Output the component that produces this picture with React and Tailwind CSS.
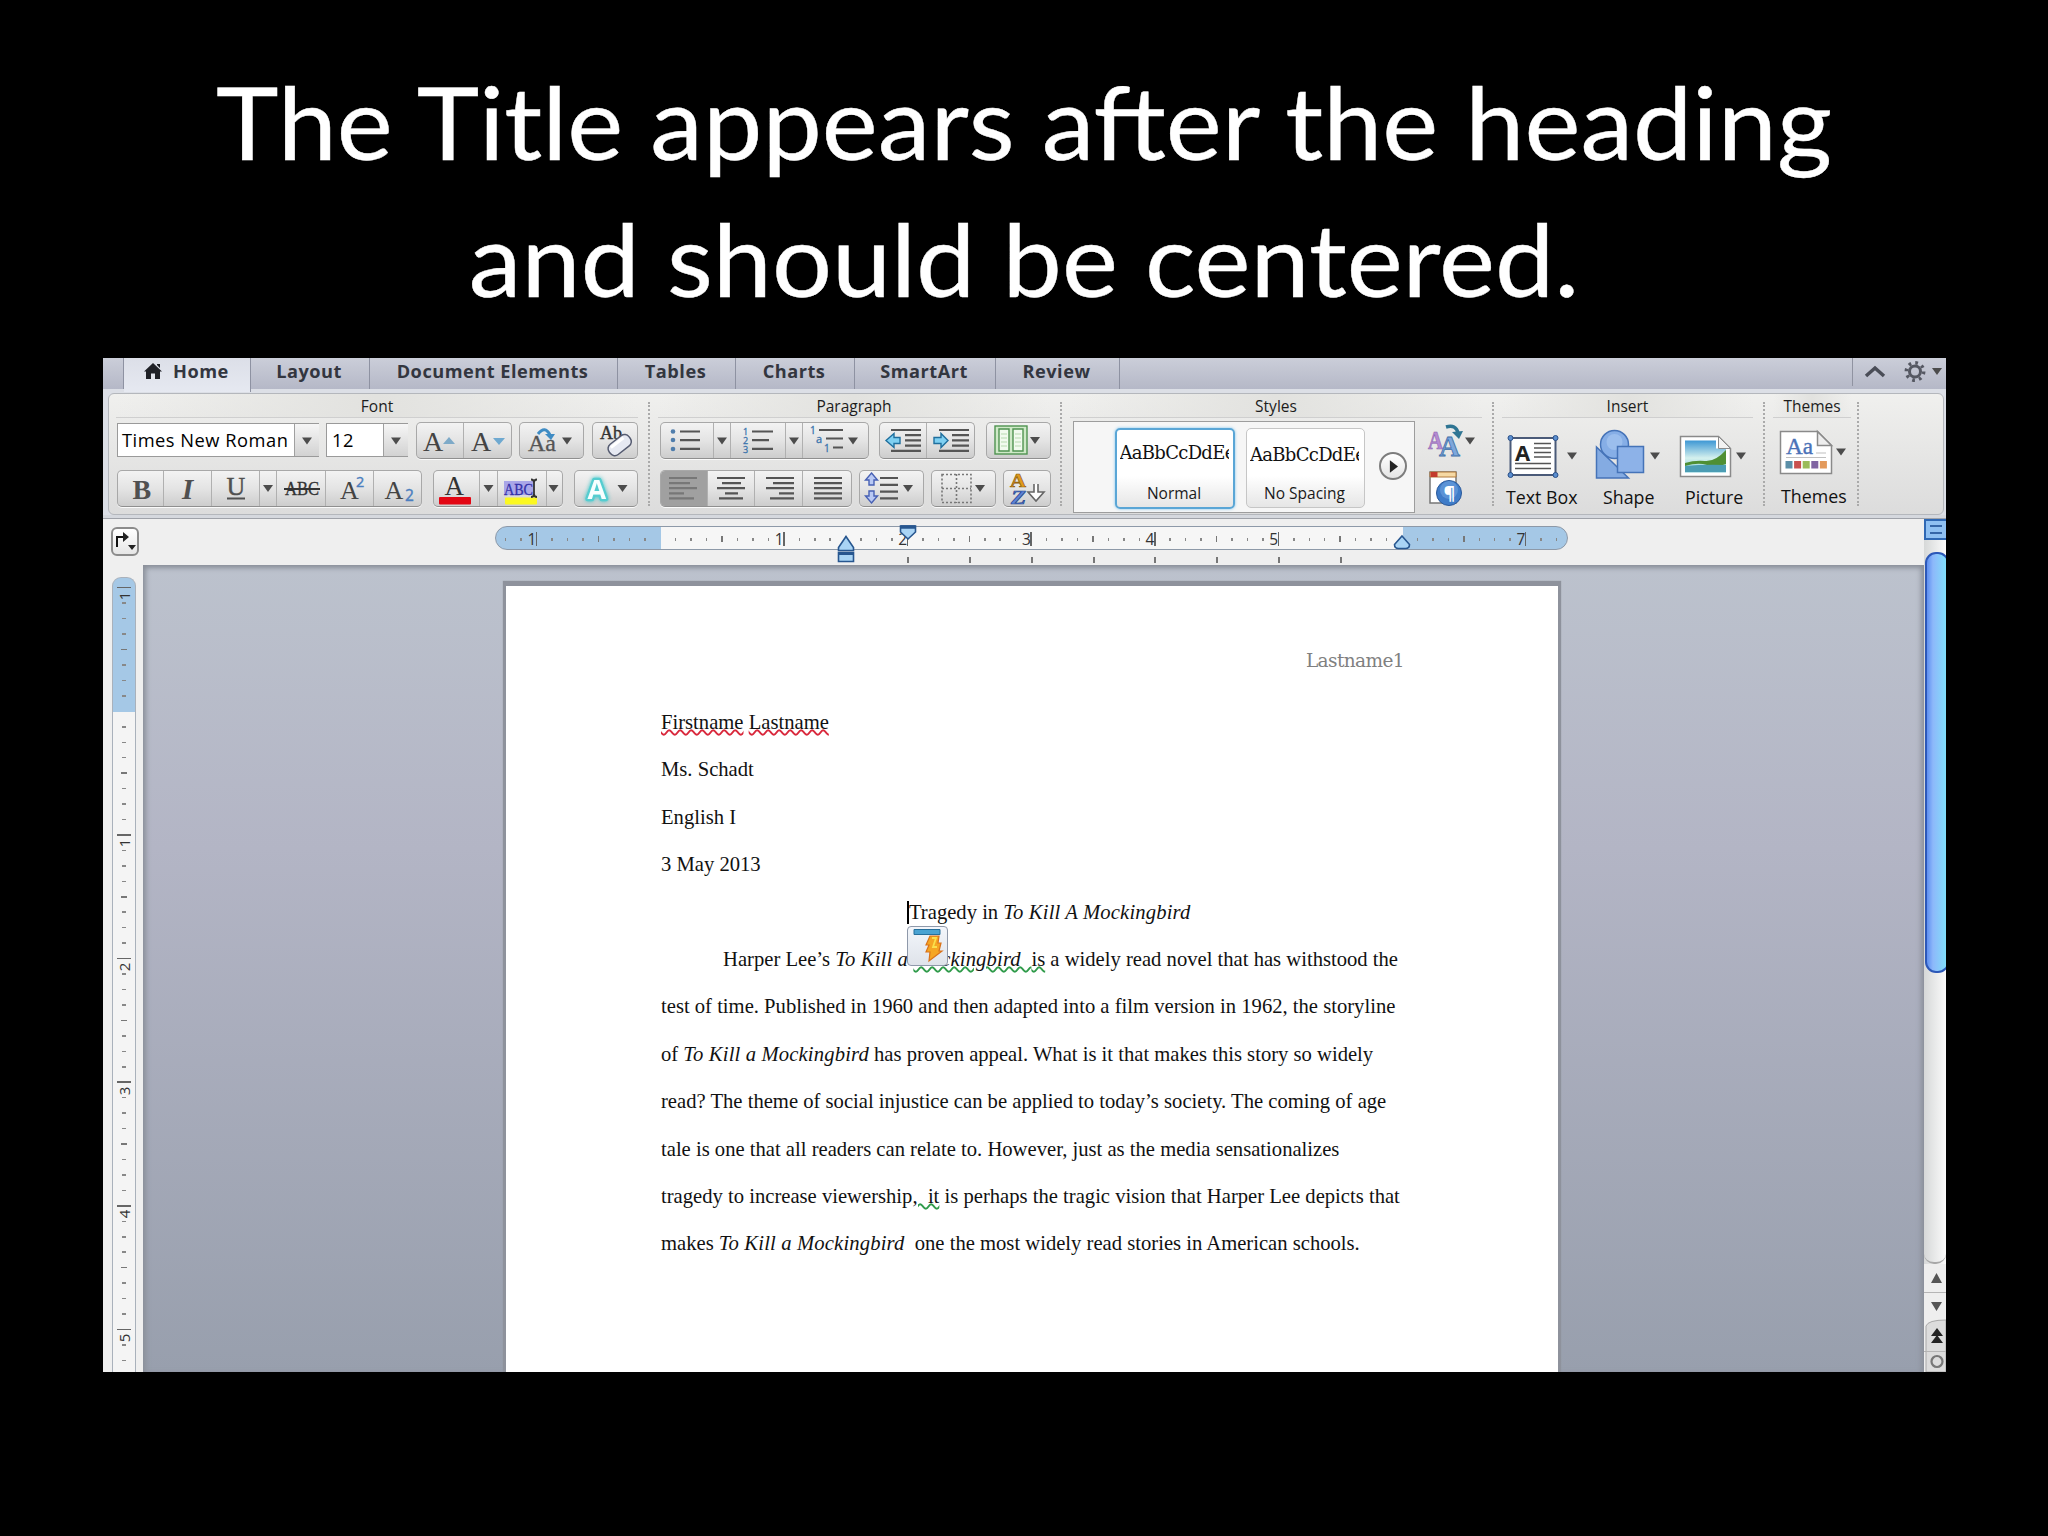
import React from "react";

const serif = "font-['Liberation_Serif',serif]";
const sans = "font-['Open_Sans',sans-serif]";

const TABS = [
  { label: "Layout", cls: "w-[119px]" },
  { label: "Document Elements", cls: "w-[248px]" },
  { label: "Tables", cls: "w-[118px]" },
  { label: "Charts", cls: "w-[119px]" },
  { label: "SmartArt", cls: "w-[141px]" },
  { label: "Review", cls: "w-[124px]" },
];

const Arrow = ({ x, y, s = 5 }) => <path d={`M${x - s} ${y - 3.5}h${s * 2}l-${s} 7z`} fill="#4c4c4c"/>;

// every glyph is drawn in ribbon coordinates, box = "x y w h"
function Glyph({ box, children }) {
  const [, , w, h] = box.split(" ");
  return <svg viewBox={box} width={w} height={h} className="block shrink-0 -mt-px">{children}</svg>;
}

function Cell({ cls, children, last, active }) {
  return (
    <div className={`h-full overflow-hidden shrink-0 ${cls} ${last ? "" : "border-r border-[#b0b0b0]"} ${active ? "bg-[#a0a0a0]" : ""}`}>
      {children}
    </div>
  );
}

function Group({ cls, children }) {
  return (
    <div className={`flex h-[37px] shrink-0 overflow-hidden rounded-[5px] border border-[#a8a8a8] border-b-[#8f8f8f] bg-gradient-to-b from-[#f3f3f3] via-[#e4e4e4] to-[#cdcdcd] shadow-[0_1px_0_#fafafa] ${cls}`}>
      {children}
    </div>
  );
}

function Section({ title, cls, titleCls = "ml-2 mr-3", children }) {
  return (
    <section className={`flex flex-col shrink-0 h-full relative ${cls}`}>
      <h2 className={`h-[24px] text-center text-[15.5px] leading-[25px] text-[#1c1c1c] border-b border-[#cfcfcf] bg-gradient-to-r from-transparent via-[#e2e2df] to-transparent ${sans} ${titleCls}`}>{title}</h2>
      {children}
      <div className="absolute right-0 top-2 bottom-2 border-r-2 border-dotted border-[#aaa]"/>
    </section>
  );
}

const Lines = ({ x, y, w, gap = 6.6, color = "#555" }) => (
  <g stroke={color} strokeWidth="2.2">
    {w.map(([a, b], i) => <path key={i} d={`M${x + a} ${y + i * gap}H${x + b}`}/>)}
  </g>
);

function FontSection() {
  return (
    <Section title="Font" cls="w-[542px]">
      <div className="flex mt-[4px] pl-[9px] h-[37px]">
        <div className="flex w-[202px] h-[34px] mt-[1px] border border-[#9a9a9a] bg-white">
          <span className={`w-[176px] shrink-0 pl-1 text-[18.300px] leading-[32px] tracking-[0.500px] text-black whitespace-nowrap ${sans}`}>Times New Roman</span>
          <div className="flex-1 border-l border-[#a0a0a0] bg-gradient-to-b from-[#f6f6f6] to-[#d2d2d2]"><Glyph box="294 424 24 34"><Arrow x={306} y={442}/></Glyph></div>
        </div>
        <div className="flex w-[82px] h-[34px] mt-[1px] ml-[7px] border border-[#9a9a9a] bg-white">
          <span className={`w-[56px] shrink-0 pl-[5px] text-[18.300px] leading-[32px] tracking-[0.500px] text-black ${sans}`}>12</span>
          <div className="flex-1 border-l border-[#a0a0a0] bg-gradient-to-b from-[#f6f6f6] to-[#d2d2d2]"><Glyph box="383 424 24 34"><Arrow x={395} y={442}/></Glyph></div>
        </div>
        <Group cls="w-[96px] ml-2">
          <Cell cls="w-[47px]">
            <Glyph box="417 422 47 37">
              <text x="423" y="450.500" fontSize="28" fill="#444" className={serif}>A</text>
              <path d="M443 444l6-7 6 7z" fill="#7eaac8"/>
            </Glyph>
          </Cell>
          <Cell cls="flex-1" last>
            <Glyph box="464 422 48 37">
              <text x="471" y="450.500" fontSize="28" fill="#444" className={serif}>A</text>
              <path d="M493 438h12l-6 7z" fill="#6fa9d0"/>
            </Glyph>
          </Cell>
        </Group>
        <Group cls="w-[65px] ml-[7px]">
          <Glyph box="520 422 63 37">
            <text x="528" y="451" fontSize="24" fill="#555" stroke="#555" strokeWidth=".3" textLength="28" className={serif}>Aa</text>
            <path d="M538 434q7-9 12 1" fill="none" stroke="#3f8cc4" strokeWidth="3"/>
            <path d="M545 434h10l-4 6z" fill="#3f8cc4"/>
            <Arrow x={567} y={441}/>
          </Glyph>
        </Group>
        <Group cls="w-[46px] ml-2">
          <Glyph box="593 422 44 37">
            <text x="600" y="439" fontSize="18" fill="#333" stroke="#333" strokeWidth=".4" className={serif}>Ab</text>
            <g transform="rotate(-38 619 445)">
              <rect x="607" y="439" width="25" height="13" rx="5.500" fill="#e6e9f2" stroke="#555b70" strokeWidth="1.500"/>
              <path d="M611 442h16" stroke="#fff" strokeWidth="3"/>
            </g>
          </Glyph>
        </Group>
      </div>
      <div className="flex mt-[11px] pl-[9px] h-[37px]">
        <Group cls="w-[305px]">
          <Cell cls="w-[46px]"><Glyph box="118 470 46 37"><text x="132.500" y="498.500" fontSize="28" fontWeight="700" fill="#505050" className={serif}>B</text></Glyph></Cell>
          <Cell cls="w-[48px]"><Glyph box="164 470 48 37"><text x="182" y="498.500" fontSize="29" fontStyle="italic" fontWeight="700" fill="#505050" className={serif}>I</text></Glyph></Cell>
          <Cell cls="w-[48px]">
            <Glyph box="212 470 48 37">
              <text x="226.500" y="495" fontSize="26" fill="#505050" stroke="#505050" strokeWidth=".4" className={serif}>U</text>
              <path d="M227 498.500h18" stroke="#505050" strokeWidth="1.800"/>
            </Glyph>
          </Cell>
          <Cell cls="w-[17px]"><Glyph box="260 470 17 37"><Arrow x={268} y={488.500}/></Glyph></Cell>
          <Cell cls="w-[49px]">
            <Glyph box="277 470 49 37">
              <text x="285" y="495" fontSize="18" fill="#333" stroke="#333" strokeWidth=".3" textLength="34" lengthAdjust="spacingAndGlyphs" className={serif}>ABC</text>
              <path d="M284 489h36" stroke="#333" strokeWidth="1.800"/>
            </Glyph>
          </Cell>
          <Cell cls="w-[48px]">
            <Glyph box="326 470 48 37">
              <text x="340" y="498.500" fontSize="26" fill="#444" className={serif}>A</text>
              <text x="356" y="487" fontSize="14.500" fill="#4c7fbf" stroke="#4c7fbf" strokeWidth=".4" className={sans}>2</text>
            </Glyph>
          </Cell>
          <Cell cls="flex-1" last>
            <Glyph box="374 470 48 37">
              <text x="384.500" y="498.500" fontSize="26" fill="#444" className={serif}>A</text>
              <text x="405" y="500.500" fontSize="15.500" fill="#4c7fbf" stroke="#4c7fbf" strokeWidth=".4" className={sans}>2</text>
            </Glyph>
          </Cell>
        </Group>
        <Group cls="w-[130px] ml-[11px]">
          <Cell cls="w-[46px]">
            <Glyph box="434 470 46 37">
              <text x="444.500" y="495" fontSize="27" fill="#333" className={serif}>A</text>
              <rect x="439" y="497" width="32" height="7.500" rx="1" fill="#e30613"/>
            </Glyph>
          </Cell>
          <Cell cls="w-[18px]"><Glyph box="480 470 18 37"><Arrow x={488.500} y={488.500}/></Glyph></Cell>
          <Cell cls="w-[49px]">
            <Glyph box="498 470 49 37">
              <rect x="504" y="481" width="30" height="14" fill="#a9a6e8"/>
              <text x="504" y="494.500" fontSize="17" fill="#3431a8" stroke="#3431a8" strokeWidth=".3" textLength="29" lengthAdjust="spacingAndGlyphs" className={serif}>ABC</text>
              <rect x="505" y="497.500" width="32" height="7" rx="1" fill="#fbf821"/>
              <path d="M531 479.500q3 0 3 3q0-3 3-3M534 482v13M531 497q3 0 3-3q0 3 3 3" fill="none" stroke="#333" strokeWidth="1.800"/>
            </Glyph>
          </Cell>
          <Cell cls="flex-1" last><Glyph box="547 470 16 37"><Arrow x={553.500} y={488.500}/></Glyph></Cell>
        </Group>
        <Group cls="w-[64px] ml-[11px]">
          <Glyph box="575 470 62 37">
            <g className="drop-shadow-[0_0_2px_#35c4c8]">
              <text x="587.500" y="498.500" fontSize="27" fontWeight="700" fill="#f8ffff" stroke="#55cdd0" strokeWidth="4.500" paintOrder="stroke" strokeLinejoin="round" className={sans}>A</text>
            </g>
            <Arrow x={622.500} y={488.500}/>
          </Glyph>
        </Group>
      </div>
    </Section>
  );
}

function ParagraphSection() {
  return (
    <Section title="Paragraph" cls="w-[412px]">
      <div className="flex mt-[4px] pl-[10px] h-[37px]">
        <Group cls="w-[209px]">
          <Cell cls="w-[53px]">
            <Glyph box="661 422 53 37">
              <Lines x={680} y={431.500} gap={8.700} w={[[0, 20], [0, 20], [0, 20]]}/>
              {[431.500, 440, 449].map(y => <circle key={y} cx="673" cy={y} r="2.300" fill="#4f7dac"/>)}
            </Glyph>
          </Cell>
          <Cell cls="w-[17px]"><Glyph box="714 422 17 37"><Arrow x={722} y={441}/></Glyph></Cell>
          <Cell cls="w-[55px]">
            <Glyph box="731 422 55 37">
              <Lines x={752} y={431.500} gap={8.700} w={[[0, 21], [0, 17], [0, 21]]}/>
              {[1, 2, 3].map(n => <text key={n} x="743" y={426.500 + n * 8.800} fontSize="9" fill="#3973ac" stroke="#3973ac" strokeWidth=".3" className={sans}>{n}</text>)}
            </Glyph>
          </Cell>
          <Cell cls="w-[17px]"><Glyph box="786 422 17 37"><Arrow x={794} y={441}/></Glyph></Cell>
          <Cell cls="flex-1" last>
            <Glyph box="803 422 66 37">
              <path d="M819 430h24M826 438.500h17M833 447.500h10" stroke="#555" strokeWidth="2.200"/>
              <text x="810" y="434" fontSize="10" fill="#3973ac" stroke="#3973ac" strokeWidth=".3" className={sans}>1</text>
              <text x="816" y="443" fontSize="11" fill="#3973ac" stroke="#3973ac" strokeWidth=".3" className={sans}>a</text>
              <text x="824" y="452" fontSize="10" fill="#3973ac" stroke="#3973ac" strokeWidth=".3" className={sans}>1</text>
              <Arrow x={853} y={441}/>
            </Glyph>
          </Cell>
        </Group>
        <Group cls="w-[96px] ml-[10px]">
          <Cell cls="w-[47px]">
            <Glyph box="880 422 47 37">
              <Lines x={891} y={430} gap={5.200} w={[[0, 30], [14, 30], [14, 30], [14, 30], [0, 30]]}/>
              <path d="M886 440.500l8-7v4h6v6h-6v4z" fill="#7fd0f2" stroke="#1f6f9e" strokeWidth="1.400"/>
            </Glyph>
          </Cell>
          <Cell cls="flex-1" last>
            <Glyph box="927 422 48 37">
              <Lines x={939} y={430} gap={5.200} w={[[0, 30], [13, 30], [13, 30], [13, 30], [0, 30]]}/>
              <path d="M948 440.500l-7-7v4h-7v6h7v4z" fill="#7fd0f2" stroke="#1f6f9e" strokeWidth="1.400"/>
            </Glyph>
          </Cell>
        </Group>
        <Group cls="w-[65px] ml-[11px]">
          <Glyph box="987 422 63 37">
            <rect x="995" y="426" width="32" height="28" fill="#cfe9c8" stroke="#4f9350" strokeWidth="1.400"/>
            <path d="M999 429h10v22h-10zM1013 429h10v22h-10z" fill="#f1faee" stroke="#4f9350" strokeWidth="1.400"/>
            <path d="M1001 434h6M1001 438h6M1001 442h6M1001 446h6M1015 434h6M1015 438h6M1015 442h6M1015 446h6" stroke="#b7d9b0"/>
            <Arrow x={1035} y={440.500}/>
          </Glyph>
        </Group>
      </div>
      <div className="flex mt-[11px] pl-[10px] h-[37px]">
        <Group cls="w-[192px]">
          <Cell cls="w-[47px]" active><Glyph box="661 470 47 37"><Lines x={669} y={478} gap={5.100} color="#777" w={[[0, 28], [0, 21], [0, 28], [0, 15], [0, 25]]}/></Glyph></Cell>
          <Cell cls="w-[47px]"><Glyph box="708 470 47 37"><Lines x={717} y={478} gap={5.100} w={[[0, 28], [5, 24], [0, 28], [8, 21], [2, 26]]}/></Glyph></Cell>
          <Cell cls="w-[48px]"><Glyph box="755 470 48 37"><Lines x={766} y={478} gap={5.100} w={[[0, 28], [7, 28], [0, 28], [13, 28], [4, 28]]}/></Glyph></Cell>
          <Cell cls="flex-1" last><Glyph box="803 470 49 37"><Lines x={814} y={478} gap={5.100} w={[[0, 28], [0, 28], [0, 28], [0, 28], [0, 28]]}/></Glyph></Cell>
        </Group>
        <Group cls="w-[65px] ml-[7px]">
          <Glyph box="860 470 63 37">
            <path d="M871.500 473l6 7h-3.500v5h-5v-5h-3.500zM871.500 503l6-7h-3.500v-5h-5v5h-3.500z" fill="#b9c9f4" stroke="#4760b4" strokeWidth="1.400"/>
            <Lines x={880} y={478} gap={6.800} w={[[0, 18], [0, 18], [0, 18], [0, 18]]}/>
            <Arrow x={908} y={488.500}/>
          </Glyph>
        </Group>
        <Group cls="w-[65px] ml-[7px]">
          <Glyph box="932 470 63 37">
            <path d="M942 474.500h29v28h-29zM956.500 474v29M942 488.500h29" fill="none" stroke="#777" strokeWidth="1.600" strokeDasharray="2 2"/>
            <Arrow x={980} y={488.500}/>
          </Glyph>
        </Group>
        <Group cls="w-[48px] ml-[7px]">
          <Glyph box="1004 470 46 37">
            <text x="1010" y="487" fontSize="18" fontWeight="700" fill="#e09a1c" stroke="#8d5a08" strokeWidth=".6" textLength="16" lengthAdjust="spacingAndGlyphs" className={serif}>A</text>
            <text x="1011" y="503.500" fontSize="18" fontWeight="700" fontStyle="italic" fill="#5c82d6" stroke="#23428a" strokeWidth=".6" textLength="15" lengthAdjust="spacingAndGlyphs" className={serif}>Z</text>
            <path d="M1034 484v8h-6l8 9 8-9h-6v-8" fill="#fff" stroke="#666" strokeWidth="1.600"/>
          </Glyph>
        </Group>
      </div>
    </Section>
  );
}

function StyleCard({ label, cls, textCls }) {
  return (
    <div className={`flex flex-col items-center rounded-[5px] bg-gradient-to-b from-white from-60% to-[#e6e6e6] ${cls}`}>
      <span className={`block w-[109px] overflow-hidden whitespace-nowrap text-[18px] leading-[22px] tracking-[-0.700px] text-[#111] font-['DejaVu_Serif',serif] ${textCls}`}>AaBbCcDdEe</span>
      <span className={`text-[15.5px] leading-[20px] text-[#1a1a1a] whitespace-nowrap ${sans}`}>{label}</span>
    </div>
  );
}

function StylesSection() {
  return (
    <Section title="Styles" cls="w-[432px]">
      <div className="flex pl-[11px] mt-[3px]">
        <div className="flex items-start w-[342px] h-[92px] border border-[#9d9d9d] bg-[#f6f6f6] pl-[41px] pt-[6px]">
          <StyleCard label="Normal" cls="w-[120px] h-[81px] pr-[2px] border-[2.500px] border-[#5aa6d6] shadow-[0_0_3px_#7cc4ee]" textCls="mt-[12px] mb-[19px]"/>
          <StyleCard label="No Spacing" cls="w-[119px] h-[80px] pr-[2px] ml-[11px] border border-[#c6c6c6]" textCls="mt-[15px] mb-[17px]"/>
          <div className="flex items-center justify-center w-[28px] h-[28px] ml-[14px] mt-[24px] rounded-full border-2 border-[#7d7d7d] bg-gradient-to-b from-white to-[#e4e4e4]">
            <svg viewBox="0 0 10 14" width="9" height="13"><path d="M1 0l9 7-9 7z" fill="#222"/></svg>
          </div>
        </div>
        <div className="pl-[10px] pt-px">
          <Glyph box="1425 422 54 40">
            <text x="1428" y="450" fontSize="25" fontWeight="700" fill="#b58ad2" stroke="#8a5fae" strokeWidth=".6" textLength="15" lengthAdjust="spacingAndGlyphs" className={serif}>A</text>
            <text x="1439" y="456.500" fontSize="30" fontWeight="700" fill="#7da7dc" stroke="#3f6ea8" strokeWidth=".8" textLength="21" lengthAdjust="spacingAndGlyphs" className={serif}>A</text>
            <path d="M1446 428q10-3 12 6" fill="none" stroke="#2f7593" strokeWidth="3.500"/>
            <path d="M1452 433l11-1-4 8z" fill="#2f7593"/>
            <Arrow x={1470} y={442}/>
          </Glyph>
          <Glyph box="1425 460 54 46">
            <path d="M1430 472h26v31h-26z" fill="#fff" stroke="#777" strokeWidth="1.500"/>
            <path d="M1430 472h26v5h-26z" fill="#f6d9a4" stroke="#b27a3c"/>
            <path d="M1430.500 472h7v5h-7z" fill="#c33b2c"/>
            <circle cx="1449" cy="493" r="12.500" fill="#3f7cc8" stroke="#29589a"/>
            <circle cx="1449" cy="490" r="9" fill="#6ea3e0" opacity=".6"/>
            <text x="1443.500" y="499.500" fontSize="18" fontWeight="700" fill="#fff" className={sans}>¶</text>
          </Glyph>
        </div>
      </div>
    </Section>
  );
}

function BigItem({ label, cls, textCls = "", box, children }) {
  return (
    <div className={`flex flex-col shrink-0 ${cls}`}>
      <Glyph box={box}>{children}</Glyph>
      <span className={`text-[17.800px] leading-[22px] text-[#111] whitespace-nowrap ${sans} ${textCls}`}>{label}</span>
    </div>
  );
}

function InsertSection() {
  return (
    <Section title="Insert" cls="w-[271px]">
      <div className="flex pt-[8px]">
        <BigItem label="Text Box" cls="w-[88px] pl-[12px]" box="1506 425 76 61">
          <path d="M1510.500 438h45v37h-45z" fill="#fff" stroke="#4a5a78" strokeWidth="2"/>
          {[[1510.500, 438], [1555.500, 438], [1510.500, 475], [1555.500, 475]].map(([x, y]) => <circle key={`${x}${y}`} cx={x} cy={y} r="2.500" fill="#5b8fd0" stroke="#2b5088"/>)}
          <text x="1515" y="461" fontSize="22" fontWeight="700" fill="#222" textLength="16" className={sans}>A</text>
          <path d="M1534 443.500h17M1534 448h17M1534 452.500h17M1534 457h17M1515 463.500h36M1515 468.500h36" stroke="#555" strokeWidth="1.400"/>
          <Arrow x={1572} y={456}/>
        </BigItem>
        <BigItem label="Shape" cls="w-[83px] pl-[11px]" textCls="ml-[10px]" box="1593 425 70 61">
          <path d="M1596.500 447v31h32z" fill="#84abe2" stroke="#4573b8" strokeWidth="1.500"/>
          <circle cx="1614.500" cy="444.500" r="14" fill="#86aee6" stroke="#4573b8" strokeWidth="1.500"/>
          <circle cx="1614.500" cy="442" r="8" fill="#a4c4f0" opacity=".7"/>
          <path d="M1617.500 446.500h26v26h-26z" fill="#8db2e8" stroke="#4573b8" strokeWidth="1.500"/>
          <Arrow x={1655} y={456}/>
        </BigItem>
        <BigItem label="Picture" cls="w-[90px] pl-[10px]" textCls="ml-[10px]" box="1675 425 76 61">
          <defs>
            <linearGradient id="sky" x1="0" y1="0" x2="0" y2="1">
              <stop offset="0" stopColor="#3d97d4"/><stop offset=".55" stopColor="#d5f1ee"/><stop offset="1" stopColor="#7ec9d6"/>
            </linearGradient>
          </defs>
          <path d="M1680.500 436.500h38l12 12v28h-50z" fill="#fff" stroke="#8a8a8a" strokeWidth="1.500"/>
          <path d="M1685 440.500h31v8h10v24h-41z" fill="url(#sky)"/>
          <path d="M1685 463q10-3 20-2t21-11v14q-10 4-19 1t-22 1z" fill="#4f8f34"/>
          <path d="M1685 466q20-2 41-1v7h-41z" fill="#4b9db4"/>
          <path d="M1718.500 436.500v12h12z" fill="#f2f2f2" stroke="#8a8a8a"/>
          <Arrow x={1741} y={456}/>
        </BigItem>
      </div>
    </Section>
  );
}

function ThemesSection() {
  const swatches = ["#5b8fa8", "#c8504e", "#9bbb59", "#8064a2", "#e39a5c"];
  return (
    <Section title="Themes" cls="w-[94px]" titleCls="mx-2">
      <div className="flex pt-[8px]">
        <BigItem label="Themes" cls="w-[94px] pl-[13px]" textCls="ml-[3px]" box="1777 425 76 60">
          <path d="M1779.500 431.500h37l14 14v28h-51z" fill="#fff" stroke="#8a8a8a" strokeWidth="1.500"/>
          <path d="M1816.500 431.500v14h14z" fill="#eee" stroke="#8a8a8a" strokeWidth="1.500"/>
          <text x="1785" y="454" fontSize="24" fill="#4a72b8" stroke="#4a72b8" strokeWidth=".4" textLength="27" lengthAdjust="spacingAndGlyphs" className={serif}>Aa</text>
          <path d="M1815 453h10M1785 457.500h40" stroke="#c0c0c0" strokeWidth="1.200"/>
          {swatches.map((c, i) => <rect key={c} x={1784.500 + i * 8.600} y="461" width="7" height="7.500" fill={c}/>)}
          <Arrow x={1840} y={452}/>
        </BigItem>
      </div>
    </Section>
  );
}

// eighth-inch divisions, counted from the page margin
const range = (a, b) => Array.from({ length: b - a + 1 }, (_, i) => a + i);

function HRuler() {
  return (
    <div className="relative flex ml-[356px] w-[1073px] h-[24px] mt-[7px] rounded-full border border-[#8d99a8] bg-[linear-gradient(to_right,#a5c8e6_165px,#f6f6f6_165px,#f6f6f6_907px,#a5c8e6_907px)] pl-[2px] pt-[2px]">
      {range(-10, 58).map(k => (
        <div key={k} className="relative flex items-center justify-center w-[15.460px] shrink-0 h-full">
          {k % 48 !== 0 && (
            <i className={`block w-[1.500px] ${k % 8 === 0 ? "h-[14px] bg-[#666]" : k % 4 === 0 ? "h-[6px] bg-[#777]" : "h-[3px] bg-[#888]"}`}/>
          )}
          {k % 8 === 0 && k % 48 !== 0 && (
            <span className={`absolute right-[8px] text-[15.500px] leading-[20px] text-[#333] ${sans}`}>{Math.abs(k) / 8}</span>
          )}
        </div>
      ))}
      <svg viewBox="800 520 120 50" width="120" height="50" className="absolute left-[304px] top-[-7px]">
        <path d="M846 536.500l7.500 11v3h-15v-3zM838.500 552.500h15v9h-15z" fill="#a9d4f5" stroke="#27568f" strokeWidth="1.600"/>
        <path d="M838.500 553.500h15" stroke="#27568f" strokeWidth="3"/>
        <path d="M900.500 526h15v6l-7.500 7-7.500-7z" fill="#a9d4f5" stroke="#27568f" strokeWidth="1.600"/>
        <path d="M900.500 527h15" stroke="#27568f" strokeWidth="3.500"/>
      </svg>
      <svg viewBox="1392 520 20 34" width="20" height="34" className="absolute left-[896px] top-[-7px]">
        <path d="M1402 536l7.500 8.500q0 4-4 4h-7q-4 0-4-4z" fill="#a9d4f5" stroke="#27568f" strokeWidth="1.600"/>
      </svg>
    </div>
  );
}

function VRuler() {
  return (
    <div className="flex flex-col w-[24px] h-[795px] mt-[12px] ml-[9px] rounded-t-[9px] border border-b-0 border-[#a9b1bb] bg-[linear-gradient(to_bottom,#a5c8e6_134px,#f4f4f4_134px)] pt-[2px] overflow-hidden shrink-0">
      {range(-8, 42).map(k => (
        <div key={k} className="relative flex items-center justify-center w-full h-[15.460px] shrink-0">
          {k !== 0 && (
            <i className={`block h-[1.500px] ${k % 8 === 0 ? "w-[14px] bg-[#666]" : k % 4 === 0 ? "w-[6px] bg-[#777]" : "w-[4px] bg-[#888]"}`}/>
          )}
          {k % 8 === 0 && k !== 0 && (
            <span className={`absolute left-[6px] top-[11px] w-[10px] text-center text-[15px] leading-[10px] -rotate-90 text-[#333] ${sans}`}>{Math.abs(k) / 8}</span>
          )}
        </div>
      ))}
    </div>
  );
}

const Line = ({ children, cls = "" }) => <p className={`h-[47.400px] leading-[47.400px] whitespace-pre ${cls}`}>{children}</p>;
const Em = ({ children }) => <em className="tracking-[0.150px]">{children}</em>;
const Red = ({ children }) => <span className="underline decoration-wavy decoration-[#d9283c] decoration-[1.500px] underline-offset-[0px]">{children}</span>;
const Green = ({ children }) => <span className="underline decoration-wavy decoration-[#2f9b4a] decoration-[1.500px] underline-offset-[0px]">{children}</span>;

function Page() {
  return (
    <article className={`w-[1052px] h-full bg-white pl-[155px] pt-[62px] text-[20.630px] text-[#111] shadow-[0_-2px_1px_3px_#8e929c] ${serif}`}>
      <p className="w-[743px] text-right text-[18.500px] leading-[26px] tracking-[-0.600px] text-[#808080] font-['DejaVu_Serif',serif]">Lastname1</p>
      <div className="pt-[25px]">
        <Line><Red>Firstname</Red> <Red>Lastname</Red></Line>
        <Line>Ms. Schadt</Line>
        <Line>English I</Line>
        <Line>3 May 2013</Line>
        <Line cls="relative pl-[248px]">
          <span className="absolute left-[246px] top-[12px] w-[2px] h-[23px] bg-black"/>
          Tragedy in <Em>To Kill A Mockingbird</Em>
          <span className="absolute z-10 left-[246px] top-[37px] w-[41px] h-[40px] rounded-[4px] border-[1.500px] border-[#8f99aa] bg-gradient-to-b from-[#f3f6fb] to-[#dfe3ea]">
            <svg viewBox="907 926 41 40" width="41" height="40" className="block -m-[1.500px]">
              <path d="M914 930.500h26v5h-26z" fill="#4aa3d2" stroke="#27709c"/>
              <path d="M930 937h9l-1 7h3l-2 8h3l-13 10 1-9h-4l3-7h-3z" fill="#f5a623" stroke="#d9721a" strokeWidth="1.200"/>
              <path d="M932 939l4 0-3 9 4 0" fill="none" stroke="#fbe04c" strokeWidth="1.800"/>
            </svg>
          </span>
        </Line>
        <Line cls="pl-[62px]">Harper Lee’s <Em>To Kill a </Em><Green><Em>Mockingbird  </Em>is</Green> a widely read novel that has withstood the</Line>
        <Line>test of time. Published in 1960 and then adapted into a film version in 1962, the storyline</Line>
        <Line>of <Em>To Kill a Mockingbird</Em> has proven appeal. What is it that makes this story so widely</Line>
        <Line>read? The theme of social injustice can be applied to today’s society. The coming of age</Line>
        <Line>tale is one that all readers can relate to. However, just as the media sensationalizes</Line>
        <Line>tragedy to increase viewership<Green>,  it</Green> is perhaps the tragic vision that Harper Lee depicts that</Line>
        <Line>makes <Em>To Kill a Mockingbird</Em>  one the most widely read stories in American schools.</Line>
      </div>
    </article>
  );
}

function Scrollbar() {
  return (
    <div className="flex flex-col w-[22px] h-full shrink-0 bg-gradient-to-r from-[#d6d8d8] to-[#fbfbfb] overflow-hidden">
      <div className="flex flex-col justify-evenly h-[21px] px-[4px] border-2 border-r-0 border-[#2f68b4] bg-[#8fc0f2]">
        <i className="h-[2px] bg-[#3566a8]"/>
        <i className="h-[2px] bg-[#3566a8]"/>
      </div>
      <div className="h-[421px] w-[24px] ml-[1px] mt-[12px] shrink-0 rounded-[11px] border-[2.500px] border-[#2c58b8] bg-gradient-to-r from-[#5f8ff0] via-[#8db8fa] via-30% to-[#7fe0fb]"/>
      <div className="h-[291px] shrink-0 rounded-b-[10px] border-b-2 border-[#a8a8a8]"/>
      <svg viewBox="1924 1264 22 108" width="22" height="108" className="block shrink-0">
        <path d="M1924 1264h22v108h-22z" fill="#eee"/>
        <path d="M1924 1292.500h22M1924 1351.500h22" stroke="#b5b5b5"/>
        <path d="M1926 1372v-46q2-6 20-6v52z" fill="#dcdcdc" stroke="#a8a8a8"/>
        <path d="M1926 1351.500h20" stroke="#b5b5b5"/>
        <path d="M1936.500 1273l5.500 10h-11zM1936.500 1311l5.500-9h-11z" fill="#555"/>
        <path d="M1937 1328l6 8h-12zM1937 1335l6 8h-12z" fill="#222"/>
        <ellipse cx="1937" cy="1361.500" rx="5.500" ry="5.500" fill="none" stroke="#777" strokeWidth="2.200"/>
      </svg>
    </div>
  );
}

export default function App() {
  return (
    <div className="w-[2048px] h-[1536px] bg-black overflow-hidden flex flex-col items-start">
      <h1 className="w-full h-[358px] shrink-0 pt-[53px] text-center text-white text-[101px] leading-[137px] font-['Lato',sans-serif] whitespace-nowrap scale-x-[1.049] [-webkit-text-stroke:0.400px_white]">
        <span className="block">The Title appears after the heading</span>
        <span className="block">and should be centered.</span>
      </h1>

      <div className="flex flex-col ml-[103px] w-[1843px] h-[1014px] shrink-0 overflow-hidden bg-[#dcdfe6]">
        <nav className={`flex h-[31px] shrink-0 bg-gradient-to-b from-[#cbced9] to-[#b5b8c7] text-[18.200px] font-bold leading-[27px] tracking-[0.500px] text-[#33363f] ${sans}`}>
          <div className="w-[21px] border-r border-[#8e92a2]"/>
          <div className="flex w-[127px] h-[34px] pl-[20px] bg-gradient-to-b from-[#dcdfe8] to-[#e6e9f1] border-r border-[#8e92a2]">
            <svg viewBox="0 0 18 17" width="18" height="17" className="mt-[5px] mr-[11px]">
              <path d="M9 0l9 8.500h-2V16h-5v-5.500H7V16H2V8.500H0zM13 1h3v4l-3-3z" fill="#1f2127"/>
            </svg>
            Home
          </div>
          {TABS.map(t => (
            <div key={t.label} className={`text-center whitespace-nowrap border-r border-[#8e92a2] pr-[2px] ${t.cls}`}>{t.label}</div>
          ))}
          <svg viewBox="1850 358 96 31" width="96" height="31" className="ml-auto">
            <path d="M1852.500 358v28" stroke="#9093a1"/>
            <path d="M1866 376l9-8 9 8" fill="none" stroke="#4a4d57" strokeWidth="3.500"/>
            <circle cx="1915" cy="371.500" r="5.500" fill="none" stroke="#555862" strokeWidth="3"/>
            <circle cx="1915" cy="371.500" r="8.700" fill="none" stroke="#555862" strokeWidth="3.500" strokeDasharray="2.700 4.133"/>
            <Arrow x={1937} y={371.500}/>
          </svg>
        </nav>

        <div className="flex h-[122px] ml-[5px] mr-[2px] mt-[4px] shrink-0 rounded-[6px] border border-[#b4b7bc] bg-gradient-to-b from-[#f0f0ee] to-[#dcdcdc]">
          <div className="flex -ml-px h-full">
            <FontSection/>
            <ParagraphSection/>
            <StylesSection/>
            <InsertSection/>
            <ThemesSection/>
          </div>
        </div>
        <div className="h-[4px] shrink-0 bg-[#d5d8de] border-b border-[#9fa2a9]"/>

        <div className="flex flex-1 min-h-0 bg-[#efefef]">
          <div className="flex flex-col flex-1 min-w-0">
            <div className="flex h-[46px] shrink-0 items-start">
              <div className="w-[28px] h-[29px] ml-[8px] mt-[8px] shrink-0 rounded-[6px] border-2 border-[#8b8b8b] bg-gradient-to-b from-white to-[#e6e6e6]">
                <svg viewBox="0 0 24 25" width="24" height="25">
                  <path d="M4 18V8h8" fill="none" stroke="#111" strokeWidth="2"/>
                  <path d="M10 3l6 5-6 5zM15 16h8l-4 5z" fill="#222"/>
                </svg>
              </div>
              <div className="flex flex-col">
                <HRuler/>
                <div className="flex justify-between w-[435px] h-[6px] mt-[7px] ml-[768px]">
                  {range(0, 7).map(i => <i key={i} className="w-[2px] bg-[#777]"/>)}
                </div>
              </div>
            </div>
            <div className="flex flex-1 min-h-0">
              <div className="w-[40px] shrink-0"><VRuler/></div>
              <main className="flex-1 pl-[363px] pt-[21px] overflow-hidden bg-gradient-to-b from-[#bcc2cd] via-[#b3b5c5] via-35% to-[#989fad] shadow-[inset_4px_4px_5px_-1px_#8b909a,inset_-4px_0_5px_-1px_#8b909a]">
                <Page/>
              </main>
            </div>
          </div>
          <Scrollbar/>
        </div>
      </div>
    </div>
  );
}
